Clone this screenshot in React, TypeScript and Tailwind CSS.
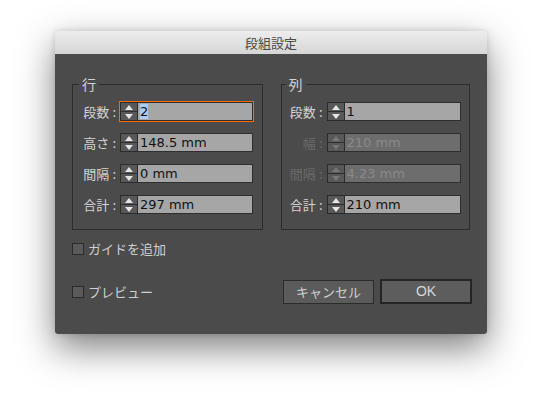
import React from "react";

const JP = { fontFamily: '"Noto Sans CJK JP", "DejaVu Sans", sans-serif' };
const NUM = { fontFamily: '"DejaVu Sans", "Noto Sans CJK JP", sans-serif' };

function Spinner({ disabled }: { disabled?: boolean }) {
  const c = disabled ? "#777777" : "#e4e4e4";
  return (
    <div className="w-[18px] h-full border border-[#2b2b2b] bg-[#585858] flex flex-col shrink-0">
      <div className="flex-1 flex items-center justify-center">
        <svg width="8" height="5" viewBox="0 0 8 5">
          <path d="M0 5 L4 0 L8 5 Z" fill={c} />
        </svg>
      </div>
      <div className="h-px bg-[#2e2e2e]" />
      <div className="flex-1 flex items-center justify-center">
        <svg width="8" height="5" viewBox="0 0 8 5">
          <path d="M0 0 L8 0 L4 5 Z" fill={c} />
        </svg>
      </div>
    </div>
  );
}

function Field({
  value,
  disabled,
  focused,
}: {
  value: string;
  disabled?: boolean;
  focused?: boolean;
}) {
  return (
    <div className="flex-1 h-[19px] flex">
      <Spinner disabled={disabled} />
      <div
        className={`flex-1 h-full border border-l-0 border-[#2e2e2e] flex items-center pl-[2px] text-[13px] whitespace-nowrap ${
          disabled ? "bg-[#6d6d6d] text-[#8a8a8a]" : "bg-[#a6a6a6] text-[#111111]"
        }`}
        style={NUM}
      >
        {focused ? (
          <span className="bg-[#a9cdf5] leading-[15px]">{value}</span>
        ) : (
          value
        )}
      </div>
    </div>
  );
}

function Row({
  label,
  value,
  disabled,
  focused,
}: {
  label: string;
  value: string;
  disabled?: boolean;
  focused?: boolean;
}) {
  return (
    <div className="flex items-center h-[19px]">
      <div
        className={`w-[38px] shrink-0 flex justify-end pr-[4px] text-[13px] leading-[19px] whitespace-nowrap ${
          disabled ? "text-[#6a6a6a]" : "text-[#d4d4d4]"
        }`}
        style={JP}
      >
        <span className="shrink-0">{label}</span>
        <span className="shrink-0 ml-[3px]">:</span>
      </div>
      {focused ? (
        <div className="flex-1 h-[21px] -mx-px border border-solid border-orange-500 flex">
          <Field value={value} focused />
        </div>
      ) : (
        <Field value={value} disabled={disabled} />
      )}
    </div>
  );
}

function Group({
  title,
  children,
  className,
}: {
  title: string;
  children: React.ReactNode;
  className?: string;
}) {
  return (
    <fieldset
      className={`border border-[#2c2c2c] h-[153px] ${className ?? ""}`}
    >
      <legend
        className="-ml-[3px] px-[3px] text-[14px] leading-[14px] text-[#d4d4d4]"
        style={JP}
      >
        {title}
      </legend>
      {children}
    </fieldset>
  );
}

function Check({ label }: { label: string }) {
  return (
    <div className="flex items-center gap-[4px] h-[14px]">
      <div className="w-[12px] h-[12px] border border-[#2a2a2a] bg-[#5a5a5a]" />
      <span className="text-[13px] text-[#d0d0d0] leading-[14px]" style={JP}>
        {label}
      </span>
    </div>
  );
}

export default function App() {
  return (
    <div className="w-[543px] h-[414px] bg-white pl-[55px] pt-[31px]">
      <div className="w-[432px] h-[303px] rounded-t-[5px] rounded-b-[3px] shadow-[0_14px_36px_rgba(0,0,0,0.5),0_0_6px_rgba(0,0,0,0.15)] flex flex-col overflow-hidden">
        <div
          className="h-[23px] bg-gradient-to-b from-[#ededed] to-[#d6d6d6] flex items-center justify-center text-[13px] text-[#4a4a4a]"
          style={JP}
        >
          段組設定
        </div>
        <div className="flex-1 bg-[#4b4b4b] flex flex-col pl-[17px] pr-[15px] pt-[23px]">
          <div className="flex gap-[18px] pr-[2px]">
            <Group title="行" className="w-[191px] pl-[9px] pr-[9px]">
              <div className="flex flex-col gap-[12px] pt-[11px]">
                <Row label="段数" value="2" focused />
                <Row label="高さ" value="148.5 mm" />
                <Row label="間隔" value="0 mm" />
                <Row label="合計" value="297 mm" />
              </div>
            </Group>
            <Group title="列" className="w-[190px] pl-[7px] pr-[8px]">
              <div className="flex flex-col gap-[12px] pt-[11px]">
                <Row label="段数" value="1" />
                <Row label="幅" value="210 mm" disabled />
                <Row label="間隔" value="4.23 mm" disabled />
                <Row label="合計" value="210 mm" />
              </div>
            </Group>
          </div>
          <div className="mt-[12px]">
            <Check label="ガイドを追加" />
          </div>
          <div className="mt-[23px] flex items-center justify-between">
            <Check label="プレビュー" />
            <div className="flex items-center gap-[6px]">
              <button
                className="w-[91px] h-[24px] border border-[#2c2c2c] bg-[#5b5b5b] text-[13px] text-[#cfcfcf] flex items-center justify-center"
                style={JP}
              >
                キャンセル
              </button>
              <button
                className="w-[92px] h-[25px] border-2 border-[#252525] bg-[#5d5d5d] text-[14px] text-[#d8d8d8] flex items-center justify-center"
                style={{ fontFamily: '"Liberation Sans", sans-serif' }}
              >
                OK
              </button>
            </div>
          </div>
        </div>
      </div>
    </div>
  );
}
